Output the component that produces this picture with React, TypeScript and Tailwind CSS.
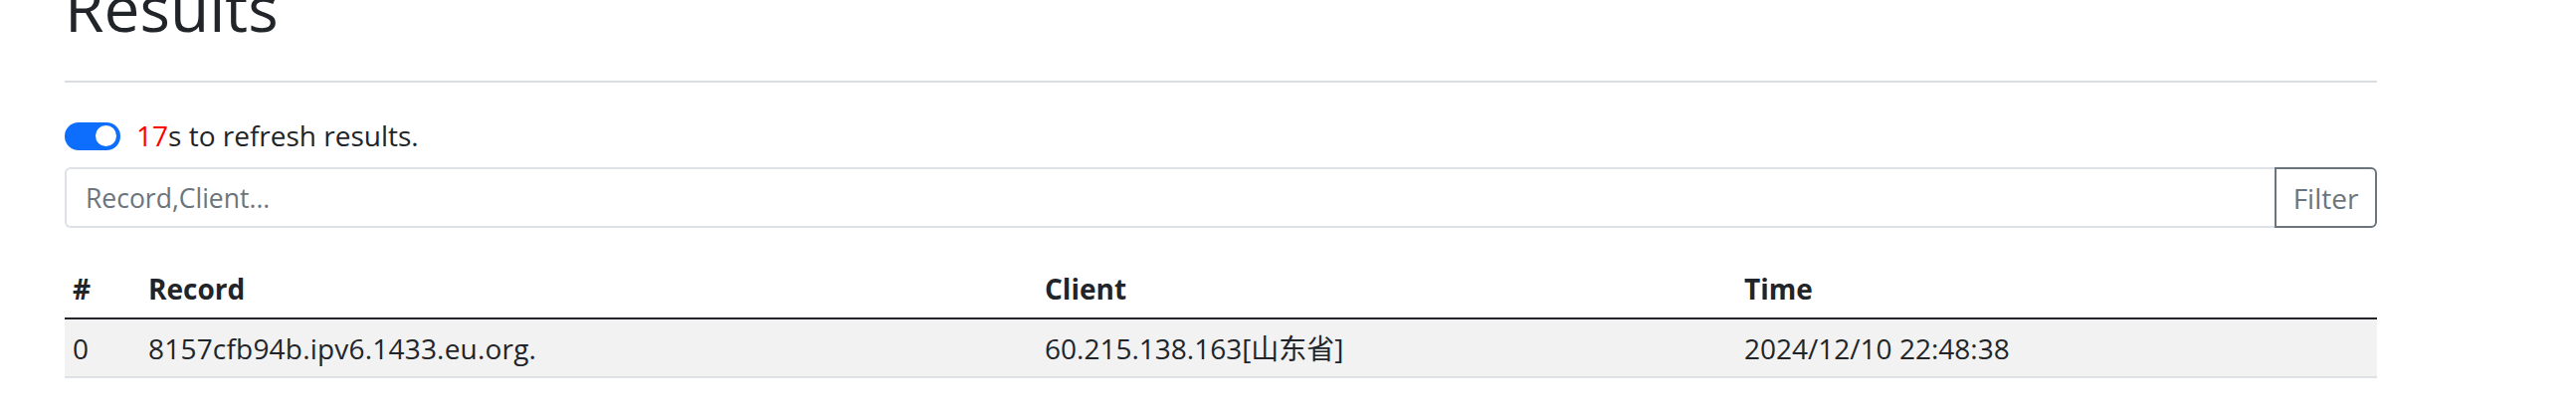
import React from "react";

const rows = [
  { id: 0, record: "8157cfb94b.ipv6.1433.eu.org.", client: "60.215.138.163[山东省]", time: "2024/12/10 22:48:38" },
];

function Toggle() {
  return (
    <span className="relative inline-flex h-[28px] w-[56px] shrink-0 items-center justify-end rounded-full bg-[#0d6efd] pr-[4px]">
      <span className="h-[21px] w-[21px] rounded-full bg-white" />
    </span>
  );
}

export default function App() {
  return (
    <div
      className="h-[419px] w-[2589px] overflow-hidden bg-white pl-[65px] text-[#212529]"
      style={{ fontFamily: '"Open Sans", "Noto Sans CJK SC", sans-serif' }}
    >
      <div className="w-[2324px]">
        <h1 className="mt-[-32px] text-[64px] leading-[79px] font-normal">Results</h1>
        <hr className="mt-[34px] border-0 border-t-2 border-[#dadee2]" />

        {/* auto refresh */}
        <div className="mt-[34px] flex h-[39px] items-center gap-[16px] text-[28px] leading-[39px]">
          <Toggle />
          <span>
            <span className="text-[#ff0000]">17</span>s to refresh results.
          </span>
        </div>

        {/* filter */}
        <div className="mt-[12px] flex h-[61px]">
          <input
            placeholder="Record,Client..."
            className="h-full flex-1 rounded-l-[6px] border-2 border-r-0 border-[#dee2e6] px-[19px] text-[26.5px] outline-none placeholder:text-[#6c757d]"
          />
          <button className="h-full w-[103px] rounded-r-[6px] border-2 border-[#6c757d] text-[28px] text-[#6c757d]">
            Filter
          </button>
        </div>

        <table className="mt-[32px] w-full table-fixed border-collapse text-[28px]">
          <colgroup>
            <col className="w-[76px]" />
            <col className="w-[901px]" />
            <col className="w-[703px]" />
            <col />
          </colgroup>
          <thead>
            <tr className="border-b-2 border-[#212529]">
              <th className="h-[59px] px-[8px] text-left font-bold">#</th>
              <th className="px-[8px] text-left font-bold">Record</th>
              <th className="px-[8px] text-left font-bold">Client</th>
              <th className="px-[8px] text-left font-bold">Time</th>
            </tr>
          </thead>
          <tbody>
            {rows.map((r) => (
              <tr key={r.id} className="border-b-2 border-[#dee2e6] bg-[#f2f2f2]">
                <td className="h-[59px] px-[8px]">{r.id}</td>
                <td className="px-[8px] tracking-[0.2px]">{r.record}</td>
                <td className="px-[8px]">{r.client}</td>
                <td className="px-[8px]">{r.time}</td>
              </tr>
            ))}
          </tbody>
        </table>
      </div>
    </div>
  );
}
